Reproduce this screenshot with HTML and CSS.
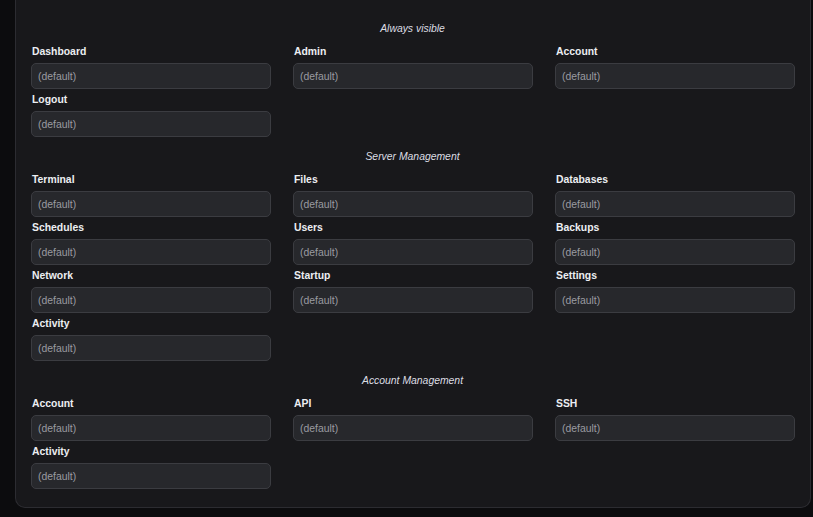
FILE: index.html
```html
<!DOCTYPE html>
<html>
<head>
<meta charset="utf-8">
<link rel="stylesheet" href="styles.css">
</head>
<body>
<div class="card">
  <section class="group">
    <div class="group-title">Always visible</div>
    <div class="grid">
      <div class="field"><label>Dashboard</label><input placeholder="(default)"></div>
      <div class="field"><label>Admin</label><input placeholder="(default)"></div>
      <div class="field"><label>Account</label><input placeholder="(default)"></div>
      <div class="field"><label>Logout</label><input placeholder="(default)"></div>
    </div>
  </section>
  <section class="group">
    <div class="group-title">Server Management</div>
    <div class="grid">
      <div class="field"><label>Terminal</label><input placeholder="(default)"></div>
      <div class="field"><label>Files</label><input placeholder="(default)"></div>
      <div class="field"><label>Databases</label><input placeholder="(default)"></div>
      <div class="field"><label>Schedules</label><input placeholder="(default)"></div>
      <div class="field"><label>Users</label><input placeholder="(default)"></div>
      <div class="field"><label>Backups</label><input placeholder="(default)"></div>
      <div class="field"><label>Network</label><input placeholder="(default)"></div>
      <div class="field"><label>Startup</label><input placeholder="(default)"></div>
      <div class="field"><label>Settings</label><input placeholder="(default)"></div>
      <div class="field"><label>Activity</label><input placeholder="(default)"></div>
    </div>
  </section>
  <section class="group">
    <div class="group-title">Account Management</div>
    <div class="grid">
      <div class="field"><label>Account</label><input placeholder="(default)"></div>
      <div class="field"><label>API</label><input placeholder="(default)"></div>
      <div class="field"><label>SSH</label><input placeholder="(default)"></div>
      <div class="field"><label>Activity</label><input placeholder="(default)"></div>
    </div>
  </section>
</div>
</body>
</html>
```
FILE: styles.css
```css
html, body {
  margin: 0;
  padding: 0;
  background: #0c0c0e;
  font-family: "Liberation Sans", Arial, sans-serif;
  font-size: 10.4px;
}
.card {
  margin: 0 2px 10px 15px;
  background: #18181b;
  border: 1px solid #2c2c31;
  border-top: none;
  border-radius: 0 0 10px 10px;
  padding: 22px 16px 18px 15px;
}
.group + .group {
  margin-top: 13px;
}
.group-title {
  text-align: center;
  font-style: italic;
  color: #dcdde3;
  line-height: 14px;
  margin-bottom: 9px;
}
.grid {
  display: grid;
  grid-template-columns: repeat(3, 240px);
  column-gap: 22px;
  row-gap: 4px;
}
.field {
  display: flex;
  flex-direction: column;
  gap: 4px;
}
.field label {
  font-weight: bold;
  color: #eceef2;
  line-height: 14px;
  padding-left: 1px;
}
.field input {
  box-sizing: border-box;
  height: 26px;
  width: 240px;
  margin: 0;
  background: #27282c;
  border: 1px solid #3b3c41;
  border-radius: 5px;
  padding: 0 6px;
  font-family: inherit;
  font-size: 10.4px;
  color: #e4e4e7;
  outline: none;
}
.field input::placeholder {
  color: #9a9ba1;
  opacity: 1;
}
```
